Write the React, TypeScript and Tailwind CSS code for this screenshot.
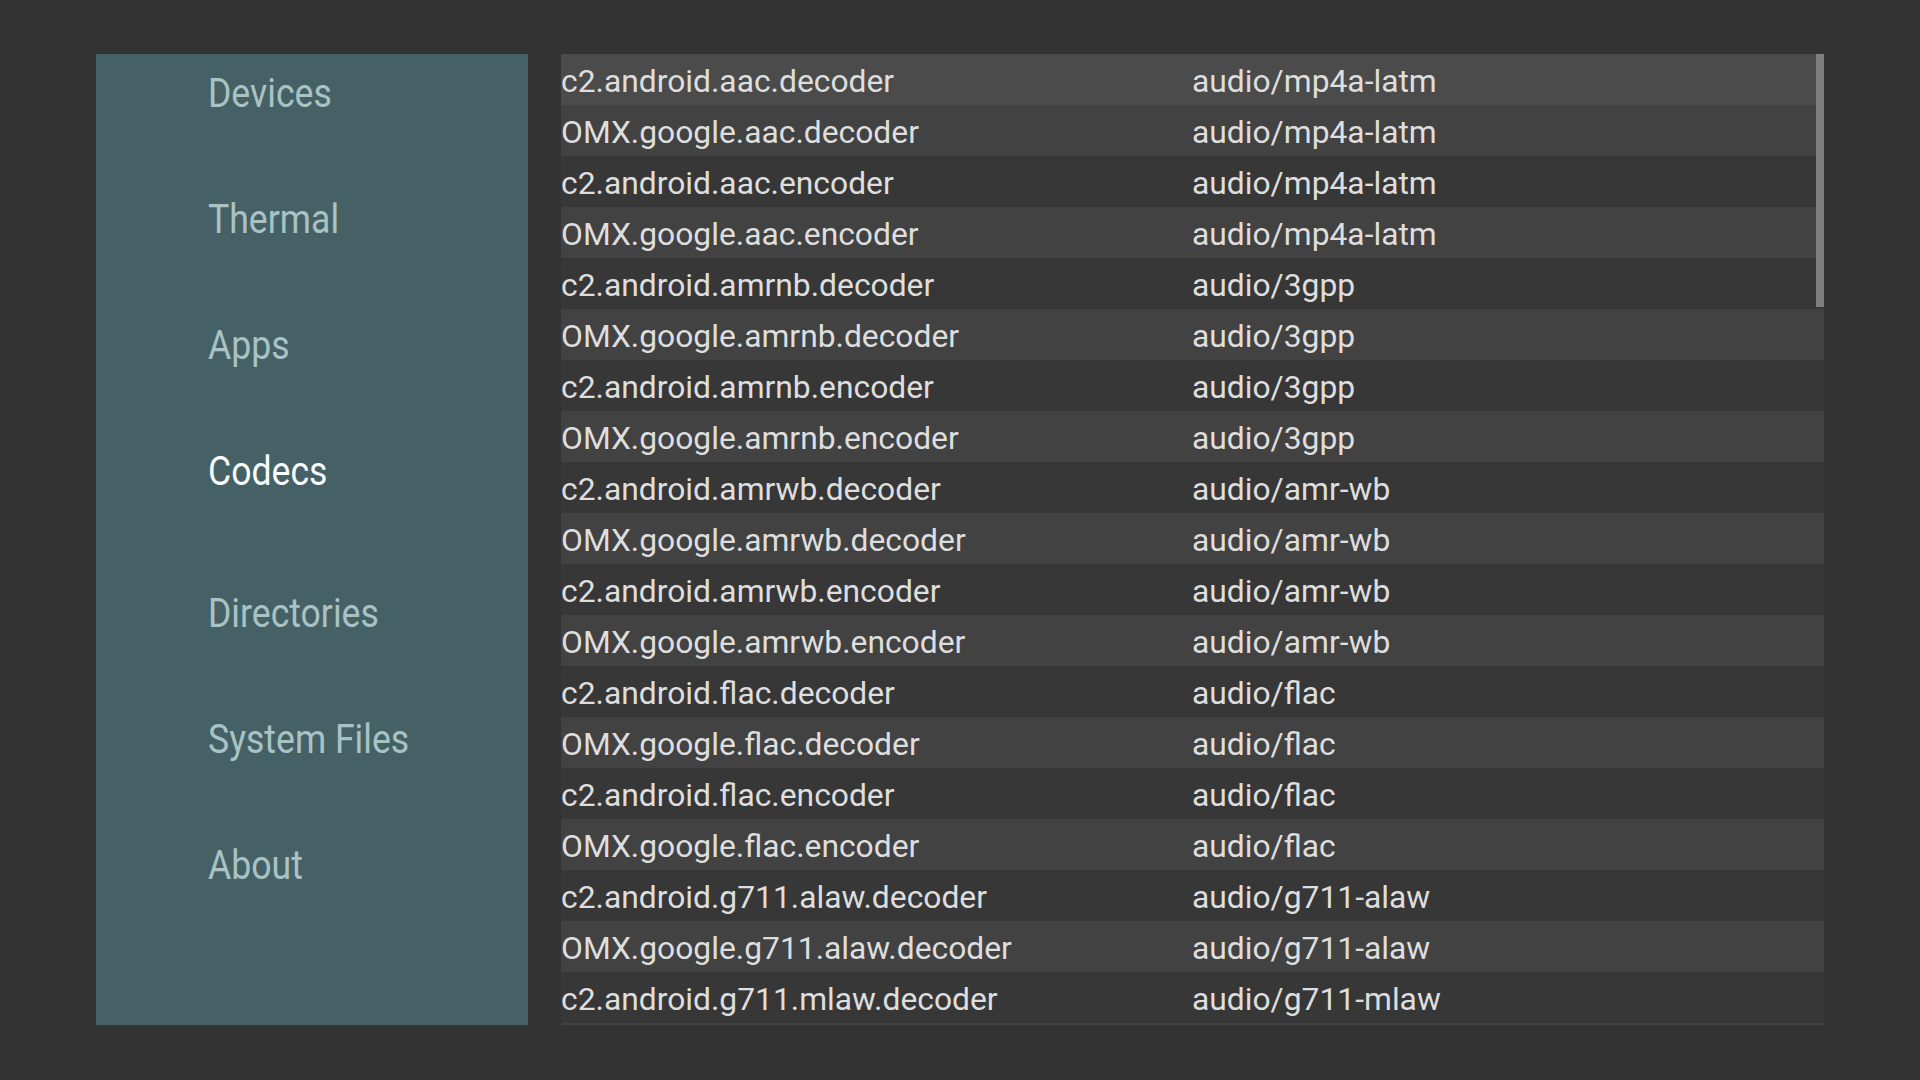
import React from "react";

const rows: [string, string][] = [
  ["c2.android.aac.decoder", "audio/mp4a-latm"],
  ["OMX.google.aac.decoder", "audio/mp4a-latm"],
  ["c2.android.aac.encoder", "audio/mp4a-latm"],
  ["OMX.google.aac.encoder", "audio/mp4a-latm"],
  ["c2.android.amrnb.decoder", "audio/3gpp"],
  ["OMX.google.amrnb.decoder", "audio/3gpp"],
  ["c2.android.amrnb.encoder", "audio/3gpp"],
  ["OMX.google.amrnb.encoder", "audio/3gpp"],
  ["c2.android.amrwb.decoder", "audio/amr-wb"],
  ["OMX.google.amrwb.decoder", "audio/amr-wb"],
  ["c2.android.amrwb.encoder", "audio/amr-wb"],
  ["OMX.google.amrwb.encoder", "audio/amr-wb"],
  ["c2.android.flac.decoder", "audio/flac"],
  ["OMX.google.flac.decoder", "audio/flac"],
  ["c2.android.flac.encoder", "audio/flac"],
  ["OMX.google.flac.encoder", "audio/flac"],
  ["c2.android.g711.alaw.decoder", "audio/g711-alaw"],
  ["OMX.google.g711.alaw.decoder", "audio/g711-alaw"],
  ["c2.android.g711.mlaw.decoder", "audio/g711-mlaw"],
];

const menu = ["Devices", "Thermal", "Apps", "Codecs", "Directories", "System Files", "About"];

export default function App() {
  return (
    <div
      className="w-[1920px] h-[1080px] bg-[#333333] flex items-start pt-[54px] pl-[96px] gap-[33px]"
      style={{ fontFamily: "Roboto, 'Noto Sans', sans-serif" }}
    >
      <div className="w-[432px] h-[971px] bg-[#456166] flex flex-col pt-[20px] pl-[112px]">
        {menu.map((m) => {
          const active = m === "Codecs";
          return (
            <div
              key={m}
              className={
                active
                  ? "h-[142px] text-[40px] leading-[40px] text-[#f7fbfb]"
                  : "h-[126px] text-[40px] leading-[40px] text-[#a9c3c4]"
              }
            >
              <span className="inline-block origin-left scale-x-[0.89] whitespace-nowrap">{m}</span>
            </div>
          );
        })}
      </div>
      <div className="relative w-[1263px] h-[971px] overflow-hidden">
        {rows.map(([name, mime], i) => {
          const bg = i === 0 ? "bg-[#4b4b4b]" : i % 2 === 1 ? "bg-[#424242]" : "bg-[#373737]";
          return (
            <div
              key={i}
              className={`${bg} h-[51px] grid grid-cols-[631px_1fr] pt-[4px] text-[31.8px] leading-[46px] text-[#dedede] whitespace-nowrap`}
            >
              <span>{name}</span>
              <span>{mime}</span>
            </div>
          );
        })}
        <div className="h-[51px] bg-[#424242]" />
        <div className="absolute right-0 top-0 w-[8px] h-[253px] bg-[#7f7f7f]" />
      </div>
    </div>
  );
}
